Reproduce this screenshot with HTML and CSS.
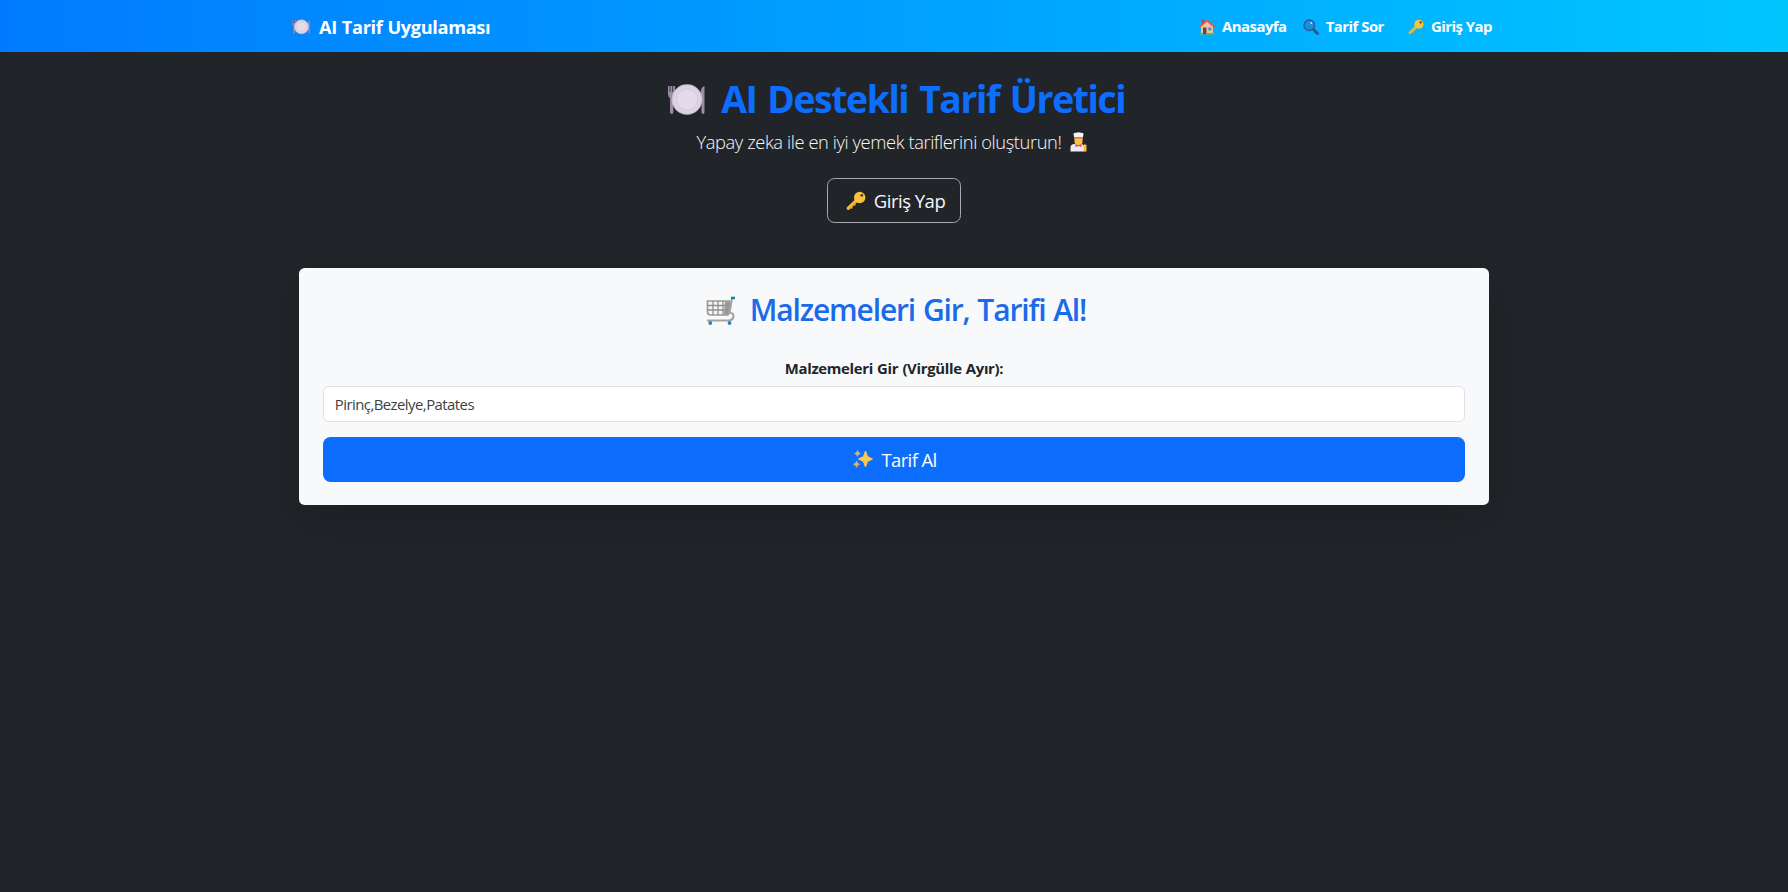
FILE: index.html
```
<!DOCTYPE html>
<html lang="tr">
<head>
<meta charset="utf-8">
<title>AI Tarif Uygulaması</title>
<link rel="stylesheet" href="styles.css">
</head>
<body>
<svg class="sprite" aria-hidden="true">
  <symbol id="plate" viewBox="0 0 38 32">
    <path d="M1 2v8q0 3 2 4v14q0 2 1.700 2T6.300 28V14q1.700-1 1.700-4V2" fill="#9b8ba4"/>
    <path d="M3 2v6M5.700 2v6" stroke="#212529" stroke-width=".8"/>
    <path d="M37.500 2q-4 1-4 8v9h1v9q0 2 1.500 2t1.500-2z" fill="#9b8ba4"/>
    <circle cx="20" cy="15.500" r="15.300" fill="#cdc0d6"/>
    <circle cx="20" cy="15.500" r="14" fill="#ddd3e5"/>
    <circle cx="20" cy="15.500" r="10.500" fill="#e3daea" stroke="#d3c7dc"/>
  </symbol>
  <symbol id="house" viewBox="0 0 16 16">
    <path d="M3 1h2v4H3z" fill="#a5483f"/>
    <path d="M2 7l6-5 6 5v8H2z" fill="#efc39c"/>
    <path d="M1 7.700L8 1.500l7 6.200" fill="none" stroke="#e4574d" stroke-width="1.700" stroke-linecap="round"/>
    <path d="M4 8.500h3.500V15H4z" fill="#6b4547"/>
    <path d="M9.300 8.500h3v3h-3z" fill="#4794bd"/>
    <path d="M.5 14h3.500v1.700H.5zM7.500 14h8v1.700h-8z" fill="#67b85b"/>
  </symbol>
  <symbol id="search" viewBox="0 0 16 16">
    <path d="M10 10l4.500 4.500" stroke="#394f83" stroke-width="2.800" stroke-linecap="round"/>
    <circle cx="6.300" cy="6.300" r="5.300" fill="#168fe2" stroke="#275c99" stroke-width="1.300"/>
    <circle cx="8.300" cy="4" r="1" fill="#bff0ff"/>
  </symbol>
  <symbol id="key" viewBox="0 0 20 20">
    <path d="M11 9L2.300 17.300" stroke="#f5b92e" stroke-width="3.300" stroke-linecap="round"/>
    <path d="M5 16l1.300 1.300M8 13l1.300 1.300" stroke="#e9a72d" stroke-width="1.800"/>
    <circle cx="13.700" cy="6.500" r="5.700" fill="#f9c23c"/>
    <circle cx="15.800" cy="4.300" r="1.400" fill="#513c2b"/>
  </symbol>
  <symbol id="chef" viewBox="0 0 17 20">
    <path d="M.5 19.500v-4q0-3.500 4-3.500h6q4 0 4 3.500v4z" fill="#eeeaf2"/>
    <path d="M4.500 5h8v5q0 3-4 3t-4-3z" fill="#fbc33f"/>
    <path d="M4 8V5h9v3l-1.500-1.500h-6z" fill="#cf8043"/>
    <path d="M4 5L3.500 2Q4 .5 6.200.8q2.300-1 4.600 0Q13 .5 13.500 2L13 5z" fill="#f7f4fa"/>
    <path d="M5.500 12l3 1.200 3-1.200v3l-3-1-3 1z" fill="#dc3f58"/>
    <path d="M13.500 18v-4l1-2 2 1v6.500h-3z" fill="#f7b93a"/>
  </symbol>
  <symbol id="cart" viewBox="0 0 30 30">
    <path d="M1.500 5h22q.5 0 .5 1l-2 13H4.500Q1.500 19 1.500 16z" fill="#f6f6f7" stroke="#9a9a9a" stroke-width="1.700"/>
    <path d="M7 5v14M12 5v14M17 5v14M1.500 9.500H23M1.500 14h21" stroke="#8f8f8f" stroke-width="1.300"/>
    <path d="M19 5.500h4.500l-1.800 13H18z" fill="#969696"/>
    <path d="M26 2l-2.500 15q4.500 0 4 3.500t-4 4H1" fill="none" stroke="#a3a3a3" stroke-width="2"/>
    <path d="M25 2h4" stroke="#217ca9" stroke-width="2.500"/>
    <circle cx="4.300" cy="27" r="1.900" fill="#2386b4"/><circle cx="23.500" cy="27" r="1.900" fill="#2386b4"/>
  </symbol>
  <symbol id="sparkles" viewBox="0 0 20 18">
    <path d="M12.500 1l2 5.500 5 2.500-5 2.500-2 5.500-2-5.500-5-2.500 5-2.500z" fill="#fac94e" stroke="#fac94e" stroke-linejoin="round"/>
    <path d="M4.500.5l.9 2.100 2.100.9-2.100.9-.9 2.100-.9-2.100L1.500 3.500l2.100-.9zM3.500 11l1 2.300 2.200 1-2.200 1-1 2.300-1-2.300-2.200-1 2.200-1z" fill="#e9b65d" stroke="#e9b65d" stroke-width=".6"/>
  </symbol>
</svg>

<header class="navbar">
  <a class="brand"><svg class="brand-icon"><use href="#plate"/></svg><span>AI Tarif Uygulaması</span></a>
  <nav class="nav">
    <a class="nav-link home"><svg><use href="#house"/></svg><span>Anasayfa</span></a>
    <a class="nav-link ask"><svg><use href="#search"/></svg><span>Tarif Sor</span></a>
    <a class="nav-link login"><svg><use href="#key"/></svg><span>Giriş Yap</span></a>
  </nav>
</header>

<main class="page">
  <h1 class="title"><svg class="title-icon"><use href="#plate"/></svg><span>AI Destekli Tarif Üretici</span></h1>
  <p class="lead"><span>Yapay zeka ile en iyi yemek tariflerini oluşturun!</span><svg class="lead-icon"><use href="#chef"/></svg></p>
  <a class="login-button"><svg class="button-icon"><use href="#key"/></svg><span>Giriş Yap</span></a>

  <section class="card">
    <h2 class="card-title"><svg class="cart-icon"><use href="#cart"/></svg><span>Malzemeleri Gir, Tarifi Al!</span></h2>
    <label class="label" for="ingredients">Malzemeleri Gir (Virgülle Ayır):</label>
    <input class="input" id="ingredients" type="text" value="Pirinç,Bezelye,Patates">
    <button class="submit"><svg class="sparkles-icon"><use href="#sparkles"/></svg><span>Tarif Al</span></button>
  </section>
</main>
</body>
</html>
```
FILE: styles.css
```
* { box-sizing: border-box; }
body {
  margin: 0;
  min-height: 100vh;
  background: #212529;
  color: #f8f9fa;
  font-family: "Open Sans", "Noto Sans", sans-serif;
}
svg { display: block; flex: none; }
span { white-space: nowrap; }
.sprite { display: none; }

.navbar {
  display: flex;
  justify-content: space-between;
  align-items: center;
  height: 52px;
  padding: 0 296px 0 291.5px;
  background: linear-gradient(90deg, #007bff, #00c6ff);
  color: #fff;
}
.brand {
  display: flex;
  align-items: center;
  gap: 9.5px;
  padding-top: 2px;
  font-size: 18.2px;
  font-weight: 700;
  letter-spacing: -.35px;
  word-spacing: .6px;
}
.brand-icon { width: 18px; height: 16px; }
.nav { display: flex; align-items: center; }
.nav-link {
  display: flex;
  align-items: center;
  gap: 7px;
  font-size: 14.9px;
  font-weight: 700;
  letter-spacing: -.5px;
}
.nav-link svg { width: 16px; height: 16px; margin-top: 1px; }
.home { margin-right: 16px; }
.ask { margin-right: 24px; }

.page {
  display: flex;
  flex-direction: column;
  align-items: center;
  padding-top: 24px;
}
.title {
  display: flex;
  align-items: center;
  gap: 16.5px;
  margin: 0 0 6.5px;
  padding-left: 4px;
  color: #0d6efd;
  font-size: 37.3px;
  font-weight: 700;
  line-height: 45px;
  letter-spacing: -1.4px;
  word-spacing: 2.5px;
}
.title-icon { width: 38px; height: 32px; margin-top: 3px; }
.lead {
  display: flex;
  align-items: center;
  gap: 9px;
  margin: 0 0 22.5px;
  padding-right: 4px;
  font-size: 18.3px;
  font-weight: 300;
  line-height: 28px;
  letter-spacing: -.4px;
}
.lead-icon { width: 17px; height: 20px; }
.login-button {
  display: flex;
  align-items: center;
  justify-content: center;
  gap: 8px;
  width: 133.5px;
  height: 45px;
  padding-left: 3px;
  border: 1.5px solid #a7a9ac;
  border-radius: 7.5px;
  font-size: 18.5px;
  letter-spacing: -.5px;
}
.button-icon { width: 20px; height: 20px; margin-top: 1px; }

.card {
  display: flex;
  flex-direction: column;
  width: 1189.4px;
  height: 237px;
  margin-top: 44.5px;
  padding: 24.5px 23.5px 23px;
  border-radius: 5.6px;
  background: #f8f9fa;
  box-shadow: 0 15px 45px rgba(0, 0, 0, .175);
}
.card-title {
  display: flex;
  align-items: center;
  justify-content: center;
  gap: 14px;
  margin: 0 0 28.5px;
  padding-left: 4px;
  color: #1a6bea;
  font-size: 30px;
  font-weight: 600;
  line-height: 36px;
  letter-spacing: -1.15px;
  word-spacing: 1.2px;
}
.cart-icon { width: 30px; height: 30px; margin-top: 2px; }
.label {
  margin-bottom: 7.5px;
  color: #212529;
  font-size: 14.9px;
  font-weight: 700;
  line-height: 22px;
  letter-spacing: -.32px;
  word-spacing: .6px;
  text-align: center;
}
.input {
  height: 35.5px;
  margin: 0 0 15px;
  padding: 0 11px;
  border: 1px solid #dee2e6;
  border-radius: 5.6px;
  background: #fff;
  color: #3b3f43;
  font: 400 14.9px "Open Sans", "Noto Sans", sans-serif;
  letter-spacing: -.54px;
}
.submit {
  display: flex;
  align-items: center;
  justify-content: center;
  gap: 8px;
  height: 45px;
  padding: 0 0 0 2px;
  border: 0;
  border-radius: 7.5px;
  background: #0d6efd;
  color: #fff;
  font: 400 18.5px "Open Sans", "Noto Sans", sans-serif;
  letter-spacing: -.63px;
}
.sparkles-icon { width: 20px; height: 18px; }
```
